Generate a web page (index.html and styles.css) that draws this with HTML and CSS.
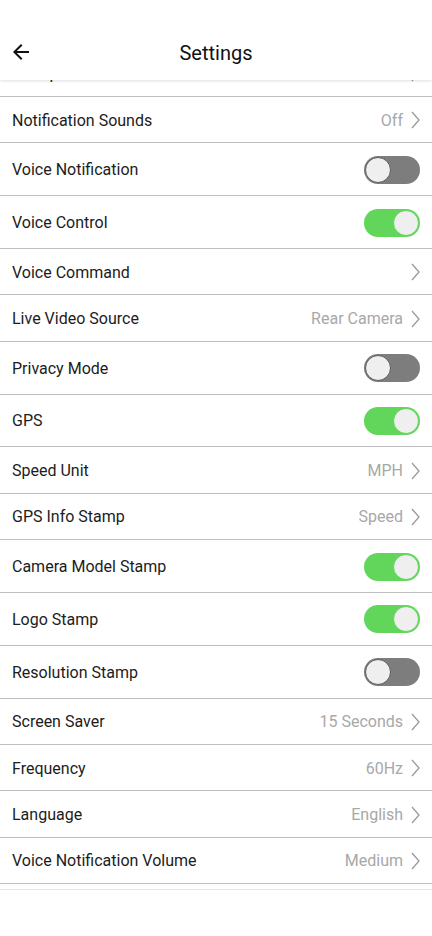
FILE: index.html
```html
<!DOCTYPE html>
<html>
<head>
  <meta charset="UTF-8">
  <title>Settings</title>
  <link rel="stylesheet" href="styles.css">
</head>
<body>
  <div class="header">
    <div class="toolbar">
      <svg class="back" width="24" height="24" viewBox="0 0 24 24"><path d="M20 11H7.83l5.59-5.59L12 4l-8 8 8 8 1.41-1.41L7.83 13H20v-2z" fill="#111"/></svg>
      <div class="title">Settings</div>
    </div>
  </div>

  <div class="list">
    <div class="peek">
      <div class="row link">
        <span class="label">Stamp Position</span>
        <span class="right"><svg class="chev" width="9" height="18" viewBox="0 0 9 18"><polyline points="1,1 8,9 1,17" fill="none" stroke="#9a9a9a" stroke-width="1.3"/></svg></span>
      </div>
    </div>

    <div class="row link"><span class="label">Notification Sounds</span><span class="right"><span class="value">Off</span><svg class="chev" width="9" height="18" viewBox="0 0 9 18"><polyline points="1,1 8,9 1,17" fill="none" stroke="#9a9a9a" stroke-width="1.3"/></svg></span></div>
    <div class="row sw"><span class="label">Voice Notification</span><span class="toggle"><span class="knob"></span></span></div>
    <div class="row sw"><span class="label">Voice Control</span><span class="toggle on"><span class="knob"></span></span></div>
    <div class="row link"><span class="label">Voice Command</span><span class="right"><svg class="chev" width="9" height="18" viewBox="0 0 9 18"><polyline points="1,1 8,9 1,17" fill="none" stroke="#9a9a9a" stroke-width="1.3"/></svg></span></div>
    <div class="row link"><span class="label">Live Video Source</span><span class="right"><span class="value">Rear Camera</span><svg class="chev" width="9" height="18" viewBox="0 0 9 18"><polyline points="1,1 8,9 1,17" fill="none" stroke="#9a9a9a" stroke-width="1.3"/></svg></span></div>
    <div class="row sw"><span class="label">Privacy Mode</span><span class="toggle"><span class="knob"></span></span></div>
    <div class="row sw"><span class="label">GPS</span><span class="toggle on"><span class="knob"></span></span></div>
    <div class="row link"><span class="label">Speed Unit</span><span class="right"><span class="value">MPH</span><svg class="chev" width="9" height="18" viewBox="0 0 9 18"><polyline points="1,1 8,9 1,17" fill="none" stroke="#9a9a9a" stroke-width="1.3"/></svg></span></div>
    <div class="row link"><span class="label">GPS Info Stamp</span><span class="right"><span class="value">Speed</span><svg class="chev" width="9" height="18" viewBox="0 0 9 18"><polyline points="1,1 8,9 1,17" fill="none" stroke="#9a9a9a" stroke-width="1.3"/></svg></span></div>
    <div class="row sw"><span class="label">Camera Model Stamp</span><span class="toggle on"><span class="knob"></span></span></div>
    <div class="row sw"><span class="label">Logo Stamp</span><span class="toggle on"><span class="knob"></span></span></div>
    <div class="row sw"><span class="label">Resolution Stamp</span><span class="toggle"><span class="knob"></span></span></div>
    <div class="row link"><span class="label">Screen Saver</span><span class="right"><span class="value">15 Seconds</span><svg class="chev" width="9" height="18" viewBox="0 0 9 18"><polyline points="1,1 8,9 1,17" fill="none" stroke="#9a9a9a" stroke-width="1.3"/></svg></span></div>
    <div class="row link"><span class="label">Frequency</span><span class="right"><span class="value">60Hz</span><svg class="chev" width="9" height="18" viewBox="0 0 9 18"><polyline points="1,1 8,9 1,17" fill="none" stroke="#9a9a9a" stroke-width="1.3"/></svg></span></div>
    <div class="row link"><span class="label">Language</span><span class="right"><span class="value">English</span><svg class="chev" width="9" height="18" viewBox="0 0 9 18"><polyline points="1,1 8,9 1,17" fill="none" stroke="#9a9a9a" stroke-width="1.3"/></svg></span></div>
    <div class="row link"><span class="label">Voice Notification Volume</span><span class="right"><span class="value">Medium</span><svg class="chev" width="9" height="18" viewBox="0 0 9 18"><polyline points="1,1 8,9 1,17" fill="none" stroke="#9a9a9a" stroke-width="1.3"/></svg></span></div>
    <div class="list-end"></div>
  </div>
</body>
</html>
```

FILE: styles.css
```css
body {
  margin: 0;
  background: #fff;
  font-family: Roboto, "Noto Sans", "Liberation Sans", sans-serif;
  color: #1c1c1c;
  width: 432px;
  height: 936px;
  overflow: hidden;
}
.header {
  height: 80px;
  padding-top: 24px;
  box-sizing: border-box;
  background: #fff;
  box-shadow: 0 1px 3px rgba(0, 0, 0, 0.13);
  position: relative;
  z-index: 1;
}
.toolbar {
  height: 56px;
  display: flex;
  align-items: center;
  justify-content: center;
  position: relative;
}
.back {
  position: absolute;
  left: 9px;
  top: 16px;
}
.title {
  font-size: 20px;
  color: #111;
  padding-top: 1px;
}
.list {
  display: flex;
  flex-direction: column;
}
.peek {
  height: 16px;
  overflow: hidden;
  display: flex;
  flex-direction: column;
  justify-content: flex-end;
  border-bottom: 1px solid #bdbdbd;
}
.peek .row {
  border-bottom: none;
  flex-shrink: 0;
  height: 45.4px;
}
.row {
  display: flex;
  align-items: center;
  justify-content: space-between;
  padding: 1px 12px 0;
  border-bottom: 1px solid #bdbdbd;
  box-sizing: border-box;
  font-size: 16px;
}
.row.link {
  height: 46.4px;
}
.row.sw {
  height: 52.8px;
}
.label {
  color: #1c1c1c;
}
.right {
  display: flex;
  align-items: center;
  gap: 8px;
}
.value {
  color: #a8a8a8;
}
.chev {
  display: block;
}
.toggle {
  width: 56px;
  height: 28px;
  border-radius: 14px;
  background: #7d7d7d;
  display: flex;
  align-items: center;
  padding: 0 1px;
  box-sizing: border-box;
}
.knob {
  width: 26px;
  height: 26px;
  border-radius: 50%;
  background: #efefef;
  border: 1px solid #5c5c5c;
  box-sizing: border-box;
}
.toggle.on {
  background: #62d65a;
  justify-content: flex-end;
}
.toggle.on .knob {
  border-color: #62d65a;
}
.list-end {
  height: 5px;
  border-bottom: 1px solid #e6e6e6;
}
```
